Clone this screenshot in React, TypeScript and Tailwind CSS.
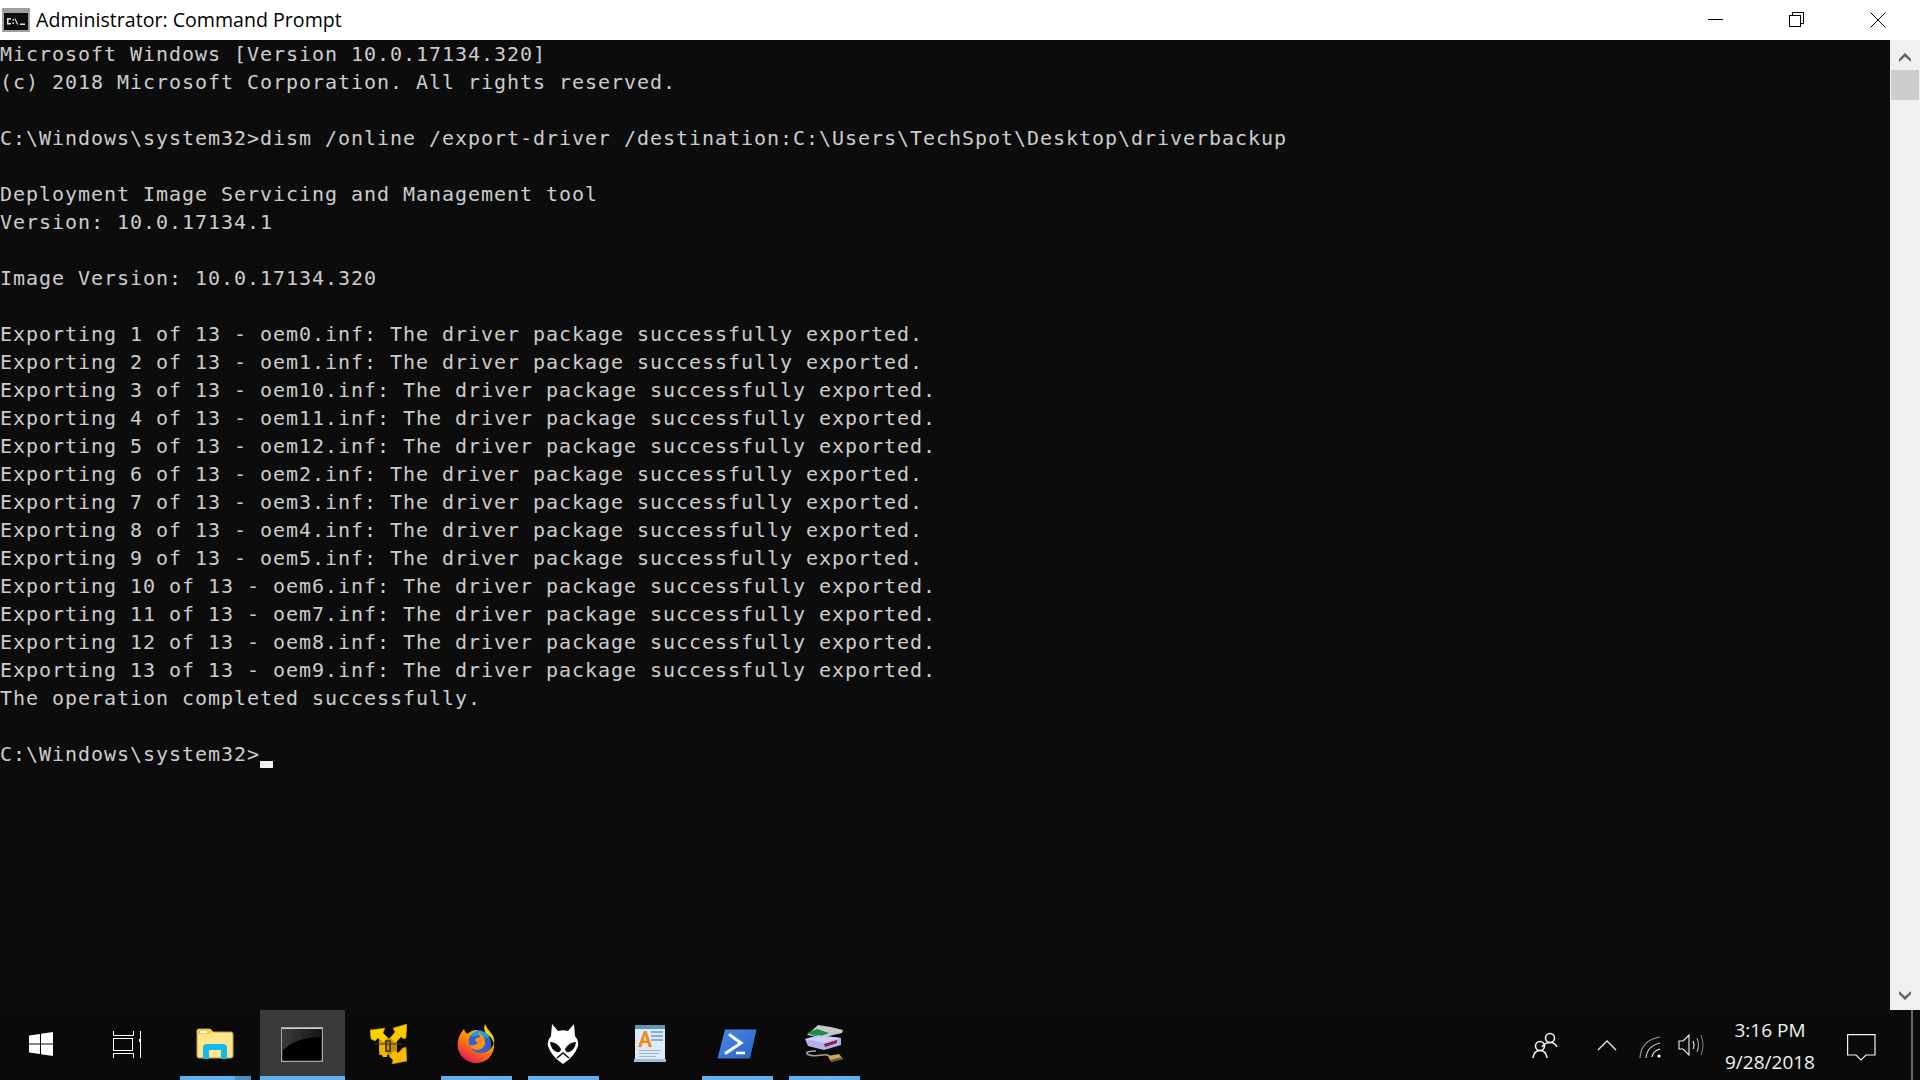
import React from "react";

const lines: string[] = [
  "Microsoft Windows [Version 10.0.17134.320]",
  "(c) 2018 Microsoft Corporation. All rights reserved.",
  "",
  "C:\\Windows\\system32>dism /online /export-driver /destination:C:\\Users\\TechSpot\\Desktop\\driverbackup",
  "",
  "Deployment Image Servicing and Management tool",
  "Version: 10.0.17134.1",
  "",
  "Image Version: 10.0.17134.320",
  "",
  "Exporting 1 of 13 - oem0.inf: The driver package successfully exported.",
  "Exporting 2 of 13 - oem1.inf: The driver package successfully exported.",
  "Exporting 3 of 13 - oem10.inf: The driver package successfully exported.",
  "Exporting 4 of 13 - oem11.inf: The driver package successfully exported.",
  "Exporting 5 of 13 - oem12.inf: The driver package successfully exported.",
  "Exporting 6 of 13 - oem2.inf: The driver package successfully exported.",
  "Exporting 7 of 13 - oem3.inf: The driver package successfully exported.",
  "Exporting 8 of 13 - oem4.inf: The driver package successfully exported.",
  "Exporting 9 of 13 - oem5.inf: The driver package successfully exported.",
  "Exporting 10 of 13 - oem6.inf: The driver package successfully exported.",
  "Exporting 11 of 13 - oem7.inf: The driver package successfully exported.",
  "Exporting 12 of 13 - oem8.inf: The driver package successfully exported.",
  "Exporting 13 of 13 - oem9.inf: The driver package successfully exported.",
  "The operation completed successfully.",
  "",
];

function TitleIcon() {
  return (
    <svg width="28" height="24" viewBox="0 0 28 24" className="shrink-0">
      <rect x="0" y="0" width="28" height="24" fill="#a0a0a0" />
      <rect x="2" y="5" width="24" height="17" fill="#0c0c0c" />
      <path d="M5 10 H9 V11.5 H6.5 V15 H9 V16.5 H5 Z M10.5 11 H12 V12.5 H10.5 Z M10.5 14.5 H12 V16 H10.5 Z M13 10 L16.5 16.5 H15 L12.5 11 Z M18 15.5 H23 V17 H18 Z" fill="#e0e0e0" />
    </svg>
  );
}

function Explorer() {
  return (
    <svg width="38" height="32" viewBox="0 0 38 32">
      <path d="M1 3 Q1 1 3 1 H14 L17 4 H35 Q37 4 37 6 V28 Q37 30 35 30 H3 Q1 30 1 28 Z" fill="#ffe58a" stroke="#b89b4a" />
      <path d="M1 3 Q1 1 3 1 H14 L17 3 L14 6 H1 Z" fill="#f6c945" />
      <rect x="4" y="3" width="7" height="2" fill="#fff" />
      <path d="M7 31 V20 Q7 16 11 16 H27 Q31 16 31 20 V31 H25 V22 H13 V31 Z" fill="#12b9ee" />
    </svg>
  );
}

function CmdBig() {
  return (
    <svg width="42" height="35" viewBox="0 0 42 35">
      <defs>
        <linearGradient id="cmdg" x1="0" y1="0" x2="1" y2="0">
          <stop offset="0" stopColor="#3c3c3c" />
          <stop offset="1" stopColor="#141414" />
        </linearGradient>
      </defs>
      <rect x="0.5" y="0.5" width="41" height="34" fill="#000" stroke="#a8a8a8" strokeWidth="1.5" />
      <path d="M1.5 1.5 H40.5 V10 Q14 10 1.5 24 Z" fill="url(#cmdg)" />
      <rect x="1" y="1" width="40" height="1" fill="#cfcfcf" />
    </svg>
  );
}

function VMware() {
  return (
    <svg width="37" height="40" viewBox="0 0 37 40">
      <path d="M9 14 H27 V31 H9 Z" fill="#c08c00" />
      <path d="M0 6 L15 4 L13 9 L18 14 L13 19 L8 14 L5 17 L1 15 Z" fill="#fdd000" stroke="#b48900" strokeWidth="0.6" />
      <path d="M37 0 L23 4 L25 8 L20 14 L25 19 L31 13 L34 15 L36 14 Z" fill="#fdc800" stroke="#b48900" strokeWidth="0.6" />
      <path d="M36 23 L37 37 L22 40 L23 36 L19 32 L24 26 L28 29 L33 24 Z" fill="#fdb900" stroke="#b48900" strokeWidth="0.6" />
      <path d="M9 17 L13 21 L17 17 V33 H13 L9 27 Z" fill="#f2b600" />
      <rect x="15" y="16" width="6" height="12" fill="#5a4300" />
      <rect x="17" y="18" width="2" height="8" fill="#c89600" />
      <path d="M5 20 H32" stroke="#4a3800" strokeWidth="1" />
    </svg>
  );
}

function Firefox() {
  return (
    <svg width="40" height="40" viewBox="0 0 40 40">
      <defs>
        <linearGradient id="ffo" x1="0.8" y1="0" x2="0.2" y2="1">
          <stop offset="0" stopColor="#ffd500" />
          <stop offset="0.5" stopColor="#ff7a10" />
          <stop offset="1" stopColor="#e0115f" />
        </linearGradient>
      </defs>
      <circle cx="21" cy="20" r="14" fill="#2f62cf" />
      <path d="M12 10 Q20 3 31 9 Q36 14 30 14 Q24 10 18 13 Z" fill="#1f9be8" />
      <path d="M20 30 Q28 31 33 24 Q29 32 20 33 Z" fill="#6e2fa8" />
      <path d="M22 8 Q30 12 29 20 Q27 26 20 26 Q15 25 14 21 Q19 22 22 19 Q18 17 20 14 Q24 14 24 12 Q22 10 22 8 Z" fill="#ff9215" />
      <path d="M8 5 Q9 9 12 10 Q16 6 22 6 Q14 10 13 15 Q12 22 18 27 Q25 31 32 27 Q38 22 38 18 Q39 28 32 35 Q24 41 14 38 Q5 35 2 25 Q0 14 8 5 Z" fill="url(#ffo)" />
      <path d="M29 0 Q31 5 35 9 Q39 14 38 20 Q36 13 30 9 Q27 5 29 0 Z" fill="#ffd400" />
    </svg>
  );
}

function Foobar() {
  return (
    <svg width="32" height="42" viewBox="0 0 32 42">
      <path d="M5 1 L11 8 Q16 6.5 21 8 L27 1 L28 13 Q32 18 31 23 Q28 33 16 41 Q4 33 1 23 Q0 18 4 13 Z" fill="#fff" />
      <path d="M3 19 Q10 19 14 26 Q13 30 10 29 Q4 27 3 19 Z" fill="#0a0a0a" />
      <path d="M29 19 Q22 19 18 26 Q19 30 22 29 Q28 27 29 19 Z" fill="#0a0a0a" />
      <path d="M10 35 L16 30 L22 35" fill="none" stroke="#0a0a0a" strokeWidth="1.5" />
    </svg>
  );
}

function Wordpad() {
  return (
    <svg width="32" height="38" viewBox="0 0 32 38">
      <rect x="1" y="0" width="30" height="37" rx="1" fill="#dde9f4" />
      <rect x="1" y="0" width="30" height="4" fill="#5f97b5" />
      <rect x="0" y="34" width="32" height="3" fill="#9fc0d6" />
      <rect x="17" y="6" width="12" height="2" fill="#7fb0dc" />
      <rect x="17" y="10" width="12" height="2" fill="#7fb0dc" />
      <rect x="17" y="14" width="12" height="2" fill="#7fb0dc" />
      <path d="M4 22 L10 6 H12.5 L18 22 H14.5 L13.5 18 H8.5 L7.5 22 Z M9.5 15.5 H12.5 L11 10.5 Z" fill="#f28a1f" fillRule="evenodd" />
      <rect x="5" y="25" width="22" height="1" fill="#9fb7cc" />
      <rect x="5" y="28" width="20" height="1" fill="#9fb7cc" />
      <rect x="5" y="31" width="17" height="1" fill="#9fb7cc" />
    </svg>
  );
}

function PowerShell() {
  return (
    <svg width="40" height="30" viewBox="0 0 40 30">
      <defs>
        <linearGradient id="psg" x1="0" y1="0" x2="1" y2="1">
          <stop offset="0" stopColor="#4a8ae8" />
          <stop offset="1" stopColor="#2a62c4" />
        </linearGradient>
      </defs>
      <path d="M8 0.5 H39.5 L33 29.5 H0.5 Z" fill="url(#psg)" />
      <path d="M13 6 L24 14 L9 24" fill="none" stroke="#fff" strokeWidth="3" strokeLinecap="round" />
      <path d="M19 24 H28" stroke="#fff" strokeWidth="2.6" />
    </svg>
  );
}

function UsbDrive() {
  return (
    <svg width="40" height="40" viewBox="0 0 40 40">
      <path d="M3 11 L14 1 L27 3 L39 6 L38 9 L25 12 L15 13 Z" fill="#c6c8cb" />
      <path d="M3 9 L13 5 L25 9 L14 13 Z" fill="#1a8f44" />
      <path d="M1 15 L14 11 L37 14 L37 21 L20 26 L4 22 Z" fill="#b3b0ee" />
      <path d="M1 15 L20 19 L37 14 L20 12 Z" fill="#cfcdf6" />
      <path d="M20 20 L33 16 L33 19 L21 23 Z" fill="#8c1f3a" />
      <path d="M12 27 Q1 27 3 30 Q8 33 18 31 Q25 30 26 33" fill="none" stroke="#a0a0a0" strokeWidth="1.6" />
      <path d="M24 32 L35 30 L39 35 L27 38 Z" fill="#c9a860" />
      <path d="M26 36 L38 33 L39 35 L27 38 Z" fill="#6b5a33" />
    </svg>
  );
}

function Minimize() {
  return <div className="w-[15px] h-px bg-black mt-[-1px]" />;
}

function Restore() {
  return (
    <svg width="15" height="15" viewBox="0 0 15 15" fill="none" stroke="#000" strokeWidth="1" className="mt-[-1px]">
      <rect x="0.5" y="3.5" width="11" height="11" />
      <path d="M3.5 3.5 V0.5 H14.5 V11.5 H11.5" />
    </svg>
  );
}

function Close() {
  return (
    <svg width="16" height="16" viewBox="0 0 16 16" fill="none" stroke="#000" strokeWidth="1" className="mt-[-1px]">
      <path d="M0.5 0.5 L15.5 15.5 M15.5 0.5 L0.5 15.5" />
    </svg>
  );
}

function Arrow({ down }: { down?: boolean }) {
  return (
    <svg width="12" height="9" viewBox="0 0 12 9" className={down ? "rotate-180" : ""}>
      <path d="M0 6 L6 0 L12 6 V9 L6 3.5 L0 9 Z" fill="#606060" />
    </svg>
  );
}

function Bar({ active, split }: { active?: boolean; split?: boolean }) {
  if (active) return <div className="absolute left-[2px] right-0 bottom-0 h-[4px] bg-[#5fb0ec]" />;
  return (
    <div className="absolute left-[9px] right-[7px] bottom-0 h-[4px] flex">
      <div className="flex-1 bg-[#5fb0ec]" />
      {split && <div className="w-[16px] bg-[#4a8ec2]" />}
    </div>
  );
}

function TaskItem({
  children,
  active,
  running,
  split,
}: {
  children?: React.ReactNode;
  active?: boolean;
  running?: boolean;
  split?: boolean;
}) {
  return (
    <div className="relative w-[87px] h-[70px] flex items-center justify-center">
      {active && <div className="absolute left-[2px] right-0 top-0 bottom-0 bg-[#3a3a3a]" />}
      <div className="relative pb-[2px] flex items-center justify-center">{children}</div>
      {(running || active) && <Bar active={active} split={split} />}
    </div>
  );
}

function Tray() {
  return (
    <div className="flex items-center h-[70px] text-[#f2f2f2] font-['Open_Sans','Noto_Sans',sans-serif] text-[19px]">
      <svg width="26" height="28" viewBox="0 0 26 28" fill="none" stroke="#eee" strokeWidth="1.6" className="mr-[39px]">
        <circle cx="18" cy="7" r="4.5" />
        <path d="M10 16 Q13 11.5 18 11.5 Q23 11.5 25 16" />
        <circle cx="8" cy="15" r="4.5" />
        <path d="M1 27 Q2 19.5 8 19.5 Q14 19.5 15 27" />
      </svg>
      <svg width="20" height="11" viewBox="0 0 20 11" fill="none" stroke="#eee" strokeWidth="1.3" className="mr-[22px]">
        <path d="M1 10 L10 1 L19 10" />
      </svg>
      <svg width="24" height="22" viewBox="0 0 24 22" fill="none" stroke="#999" strokeWidth="1.2" className="mr-[15px] mt-[4px]">
        <path d="M1 22 Q2 4 21 1" />
        <path d="M7 22 Q8 10 21 7" stroke="#ccc" />
        <path d="M13 21 Q14 15 21 13" stroke="#eee" />
        <circle cx="20" cy="20" r="1.6" fill="#fff" stroke="none" />
      </svg>
      <svg width="28" height="22" viewBox="0 0 28 22" fill="none" stroke="#eee" strokeWidth="1.1" className="mr-[13px]">
        <path d="M1 7 H5 L11 1 V21 L5 15 H1 Z" />
        <path d="M15 7 Q17 11 15 15" />
        <path d="M19 4 Q22 11 19 18" stroke="#aaa" />
        <path d="M23 1 Q27 11 23 21" stroke="#777" />
      </svg>
      <div className="w-[100px] flex flex-col items-center leading-[32px] pl-[2px] pt-[1px]">
        <span>3:16 PM</span>
        <span>9/28/2018</span>
      </div>
      <svg width="29" height="28" viewBox="0 0 29 28" fill="none" stroke="#f2f2f2" strokeWidth="1.2" className="ml-[28px] mr-[44px] mt-[6px]">
        <path d="M0.6 0.6 H28 V21 H19 L14 26 L9 21 H0.6 Z" />
      </svg>
    </div>
  );
}

export default function App() {
  return (
    <div className="w-[1920px] h-[1080px] flex flex-col overflow-hidden bg-[#0c0c0c]">
      <div className="h-[40px] shrink-0 bg-white flex items-center relative">
        <div className="pl-[2px] pr-[6px] flex items-center">
          <TitleIcon />
        </div>
        <span className="text-[19.6px] text-black font-['Open_Sans','Noto_Sans',sans-serif] leading-none">Administrator: Command Prompt</span>
        <div className="ml-auto flex items-center h-full">
          <div className="w-[81px] flex justify-center"><Minimize /></div>
          <div className="w-[81px] flex justify-center"><Restore /></div>
          <div className="w-[81px] flex justify-center"><Close /></div>
          <div className="w-[2px]" />
        </div>
      </div>
      <div className="h-[970px] shrink-0 flex">
        <div className="flex-1 overflow-hidden font-['DejaVu_Sans_Mono',monospace] text-[20px] tracking-[0.96px] text-[#cccccc] whitespace-pre">
          {lines.map((l, i) => (
            <div key={i} className="h-[28px] leading-[28px]">{l}</div>
          ))}
          <div className="h-[28px] leading-[28px] flex items-end">
            <span>{"C:\\Windows\\system32>"}</span>
            <span className="w-[13px] h-[7px] bg-[#f2f2f2]" />
          </div>
        </div>
        <div className="w-[30px] bg-[#f0f0f0] flex flex-col items-center">
          <div className="h-[30px] w-full flex items-center justify-center pt-[4px]"><Arrow /></div>
          <div className="w-[28px] h-[30px] bg-[#cdcdcd]" />
          <div className="flex-1" />
          <div className="h-[30px] w-full flex items-center justify-center"><Arrow down /></div>
        </div>
      </div>
      <div className="h-[70px] shrink-0 bg-[#0a0a0a] flex items-center relative">
        <div className="flex ml-[-3px]">
          <TaskItem>
            <svg width="24" height="24" viewBox="0 0 24 24" fill="#fff">
              <path d="M0 3.4 L11 1.9 V11.4 H0 Z M12 1.7 L24 0 V11.4 H12 Z M0 12.6 H11 V22.1 L0 20.6 Z M12 12.6 H24 V24 L12 22.3 Z" />
            </svg>
          </TaskItem>
          <TaskItem>
            <svg width="28" height="27" viewBox="0 0 28 27" fill="none" stroke="#fff" strokeWidth="1" className="mr-[2px]">
              <path d="M0.5 0 V4.5 H20.5 V0" />
              <rect x="0.5" y="7.5" width="19" height="12" />
              <path d="M0.5 27 V22.5 H20.5 V27" />
              <path d="M27.5 0 V27" />
              <rect x="26" y="8" width="3" height="3" fill="#fff" stroke="none" />
            </svg>
          </TaskItem>
          <TaskItem running split><Explorer /></TaskItem>
          <TaskItem active><CmdBig /></TaskItem>
          <TaskItem><VMware /></TaskItem>
          <TaskItem running><Firefox /></TaskItem>
          <TaskItem running><Foobar /></TaskItem>
          <TaskItem><Wordpad /></TaskItem>
          <TaskItem running><PowerShell /></TaskItem>
          <TaskItem running><UsbDrive /></TaskItem>
        </div>
        <div className="ml-auto"><Tray /></div>
        <div className="absolute right-[7px] top-0 bottom-0 w-[2px] bg-[#666]" />
      </div>
    </div>
  );
}
